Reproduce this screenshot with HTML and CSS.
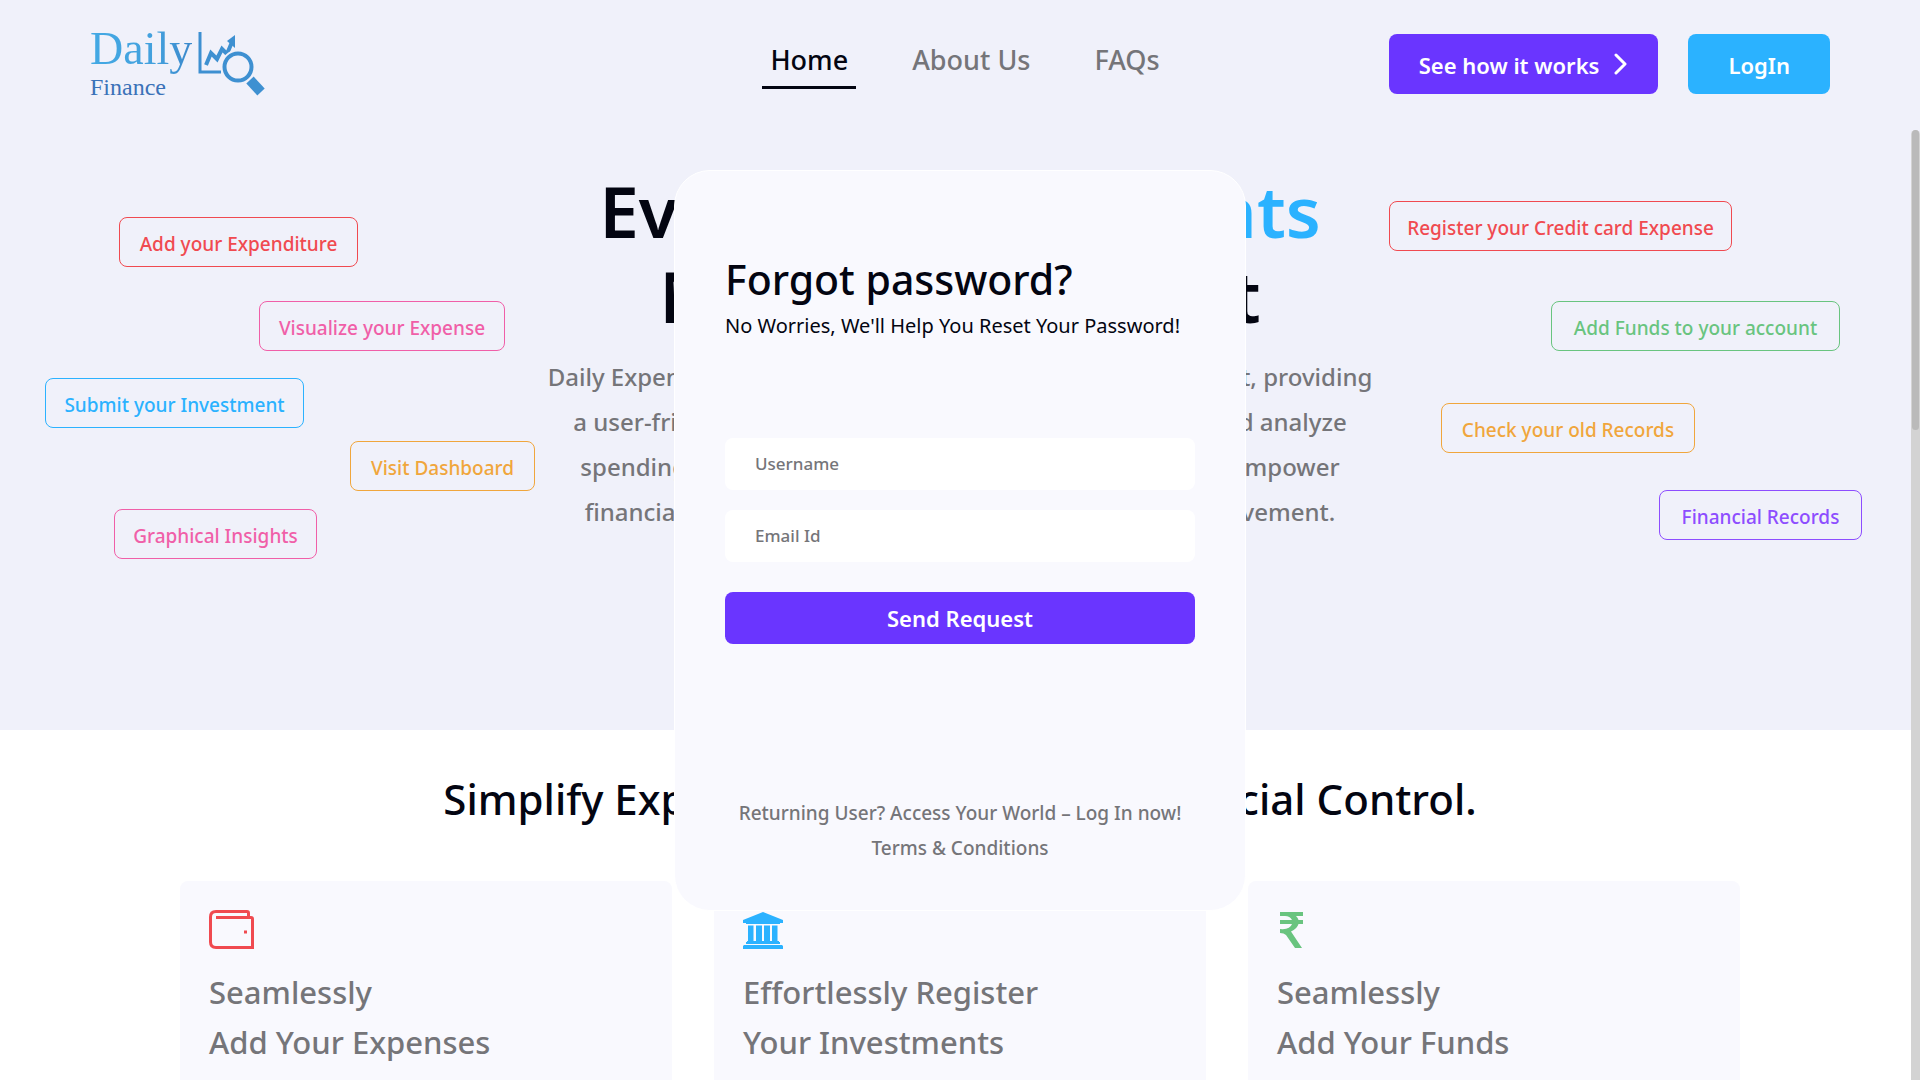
FILE: index.html
```html
<!DOCTYPE html>
<html lang="en">
<head>
<meta charset="utf-8">
<title>Daily Finance</title>
<link rel="stylesheet" href="styles.css">
</head>
<body>
<header class="header">
  <a class="logo" href="#">
    <span class="logo-text"><span class="logo-daily">Daily</span><span class="logo-finance">Finance</span></span>
    <svg class="logo-icon" width="68" height="66" viewBox="0 0 68 66" fill="none" stroke="#3e90d1">
      <path d="M2 0V40H23" stroke-width="3"/>
      <path d="M8 33L13 21L19 27L24 17L29 22L34 10" stroke-width="4"/>
      <path d="M29 9L37 3V16Z" fill="#3e90d1" stroke="none"/>
      <circle cx="40" cy="35" r="15" stroke="#f0f1fa" stroke-width="5"/>
      <circle cx="40" cy="35" r="13.500" stroke-width="4"/>
      <path d="M52 48L63 60" stroke-width="10"/>
    </svg>
  </a>
  <nav class="nav">
    <a class="nav-link active" href="#">Home</a>
    <a class="nav-link" href="#">About Us</a>
    <a class="nav-link" href="#">FAQs</a>
  </nav>
  <div class="actions">
    <button class="btn btn-primary" type="button">See how it works
      <svg width="14" height="24" viewBox="0 0 14 24" fill="none" stroke="#fff" stroke-width="3" stroke-linecap="round" stroke-linejoin="round"><path d="M2 2L11 11L2 20"/></svg>
    </button>
    <button class="btn btn-login" type="button">LogIn</button>
  </div>
</header>
<main>
  <section class="hero">
    <h1 class="hero-title">Every Budget <span class="accent">Counts</span><br>Maximize Budget</h1>
    <p class="hero-text">Daily Expense is your trusted partner in budget management, providing<br>a user-friendly platform to effortlessly record, organize and analyze<br>spending habits. Our tools and clear insights are built to empower<br>financial well-being, smarter planning and real goal achievement.</p>
    <span class="chip red chip-expenditure">Add your Expenditure</span>
    <span class="chip pink chip-visualize">Visualize your Expense</span>
    <span class="chip blue chip-investment">Submit your Investment</span>
    <span class="chip orange chip-dashboard">Visit Dashboard</span>
    <span class="chip pink chip-insights">Graphical Insights</span>
    <span class="chip red chip-credit">Register your Credit card Expense</span>
    <span class="chip green chip-funds">Add Funds to your account</span>
    <span class="chip orange chip-old">Check your old Records</span>
    <span class="chip purple chip-records">Financial Records</span>
  </section>
  <section class="features">
    <h2 class="features-title">Simplify Expenses, Empower Your Financial Control.</h2>
    <div class="cards">
      <article class="card">
        <svg class="card-icon" width="46" height="40" viewBox="0 0 46 40" fill="none" stroke="#f04a50" stroke-width="3">
          <path d="M7 7.500H42Q43.500 7.500 43.500 9V37.500H7Q1.500 37.500 1.500 32V7Q1.500 1.500 7 1.500H38Q39.500 1.500 39.500 3V7"/>
          <path d="M35 22H38" />
        </svg>
        <h3 class="card-title">Seamlessly<br>Add Your Expenses</h3>
      </article>
      <article class="card">
        <svg class="card-icon" width="40" height="40" viewBox="0 0 40 40" fill="#2bb2ff">
          <path d="M20 2L40 10V13H37V14H3V13H0V10ZM5 15.500H10.500V31H13V15.500H19V31H21V15.500H27V31H29V15.500H34.500V31H36V32H37V34H3V32H4V31H5ZM1 35H39L40 36V39H0V36Z"/>
        </svg>
        <h3 class="card-title">Effortlessly Register<br>Your Investments</h3>
      </article>
      <article class="card">
        <svg class="card-icon" width="40" height="40" viewBox="0 0 40 40" fill="#69c47f">
          <path d="M3 2H26V6H19Q21 8 21.500 10H26V14H21.500Q20 19 14 21.500L25 38H18L9 25Q7 23 3 23V19Q13 20 15 14H3V10H15Q13 6 8 6H3Z"/>
        </svg>
        <h3 class="card-title">Seamlessly<br>Add Your Funds</h3>
      </article>
    </div>
  </section>
</main>
<div class="overlay">
  <form class="modal">
    <h2 class="modal-title">Forgot password?</h2>
    <p class="modal-sub">No Worries, We'll Help You Reset Your Password!</p>
    <input class="field" type="text" placeholder="Username" aria-label="Username">
    <input class="field" type="email" placeholder="Email Id" aria-label="Email Id">
    <button class="send" type="button">Send Request</button>
    <div class="modal-links">
      <a href="#">Returning User? Access Your World – Log In now!</a>
      <a href="#">Terms &amp; Conditions</a>
    </div>
  </form>
</div>
<div class="scroll-track"><div class="scroll-thumb"></div></div>
</body>
</html>
```
FILE: styles.css
```css
* { box-sizing: border-box; }
body {
  margin: 0;
  height: 100vh;
  overflow: hidden;
  background: #fff;
  color: #030511;
  font-family: "Noto Sans", "Open Sans", sans-serif;
  font-weight: 500;
}
h1, h2, h3, p { margin: 0; font-weight: 500; }
a { color: inherit; text-decoration: none; }
button, input { font-family: inherit; border: 0; }

.header {
  display: grid;
  grid-template-columns: 1fr auto 1fr;
  align-items: start;
  height: 130px;
  padding: 0 90px;
  background: #f0f1fa;
}
.logo { display: flex; gap: 6px; padding-top: 24px; color: #3e90d1; font-family: "Liberation Serif", serif; font-weight: 400; }
.logo-text { display: flex; flex-direction: column; }
.logo-daily {
  font-size: 46px;
  line-height: 50px;
  background: linear-gradient(90deg, #43a9e4, #43a0dd 65%, #3b88cb);
  background-clip: text;
  color: transparent;
}
.logo-finance { font-size: 24px; line-height: 26px; color: #3b72b8; }
.logo-icon { margin-top: 8px; }
.nav { display: flex; gap: 48px; margin-left: 10px; padding-top: 34px; font-size: 27px; line-height: 52px; color: #757579; }
.nav-link { padding: 0 8px; border-bottom: 3px solid transparent; }
.nav-link.active { color: #030511; border-color: #030511; }
.actions { display: flex; justify-content: flex-end; gap: 30px; padding-top: 34px; }
.btn {
  display: flex;
  align-items: center;
  gap: 15px;
  height: 60px;
  padding: 2px 30px 0;
  border-radius: 8px;
  color: #fff;
  font-size: 22px;
  font-weight: 600;
}
.btn-primary { background: #6a35ff; }
.btn-login { padding: 2px 40px 0; background: #2bb2ff; }

.hero { position: relative; height: 600px; padding-top: 38px; background: #f0f1fa; text-align: center; }
.hero-title { font-size: 71px; line-height: 85px; font-weight: 600; }
.accent { color: #2bb2ff; }
.hero-text { margin-top: 16px; font-size: 24px; line-height: 45px; color: #757579; }
.chip {
  position: absolute;
  height: 50px;
  padding-top: 2px;
  border: 1px solid currentColor;
  border-radius: 8px;
  font-size: 19px;
  line-height: 48px;
  white-space: nowrap;
}
.red { color: #f04a50; }
.pink { color: #f05fa8; }
.blue { color: #2bb2ff; }
.orange { color: #f0a63c; }
.green { color: #69c47f; }
.purple { color: #8d4dff; }
.chip-expenditure { left: 119px; top: 87px; width: 239px; }
.chip-visualize { left: 259px; top: 171px; width: 246px; }
.chip-investment { left: 45px; top: 248px; width: 259px; }
.chip-dashboard { left: 350px; top: 311px; width: 185px; }
.chip-insights { left: 114px; top: 379px; width: 203px; }
.chip-credit { right: 188px; top: 71px; width: 343px; }
.chip-funds { right: 80px; top: 171px; width: 289px; }
.chip-old { right: 225px; top: 273px; width: 254px; }
.chip-records { right: 58px; top: 360px; width: 203px; }

.features { padding: 39px 180px; }
.features-title { text-align: center; font-size: 42px; line-height: 60px; }
.cards { display: grid; grid-template-columns: repeat(3, 1fr); gap: 42px; margin-top: 52px; }
.card { min-height: 360px; padding: 29px; border-radius: 8px; background: #f9f9fe; }
.card-icon { display: block; }
.card-title { margin-top: 17px; font-size: 31px; line-height: 50px; color: #757579; }

.overlay { position: fixed; inset: 0; display: grid; place-items: center; }
.modal {
  display: flex;
  flex-direction: column;
  width: 572px;
  padding: 83px 50px 44px;
  border: 1px solid #fff;
  border-radius: 36px;
  background: #f9f9fe;
}
.modal-title { font-size: 41px; line-height: 50px; }
.modal-sub { margin: 8px 0 98px; font-size: 20px; line-height: 28px; font-weight: 400; }
.field {
  height: 52px;
  margin-bottom: 20px;
  padding: 0 30px;
  border-radius: 8px;
  background: #fff;
  font-size: 17px;
  font-weight: 500;
}
.field::placeholder { color: #757579; opacity: 1; }
.send { height: 52px; margin-top: 10px; border-radius: 8px; background: #6a35ff; color: #fff; font-size: 22px; font-weight: 600; }
.modal-links { display: flex; flex-direction: column; align-items: center; margin-top: 152px; font-size: 19px; line-height: 35px; color: #757579; }

.scroll-track { position: fixed; top: 130px; right: 0; bottom: 0; width: 9px; border-radius: 5px 5px 0 0; background: #d3d3d3; }
.scroll-thumb { height: 300px; margin: 0 1px; border-radius: 4px; background: #bababa; }
```
